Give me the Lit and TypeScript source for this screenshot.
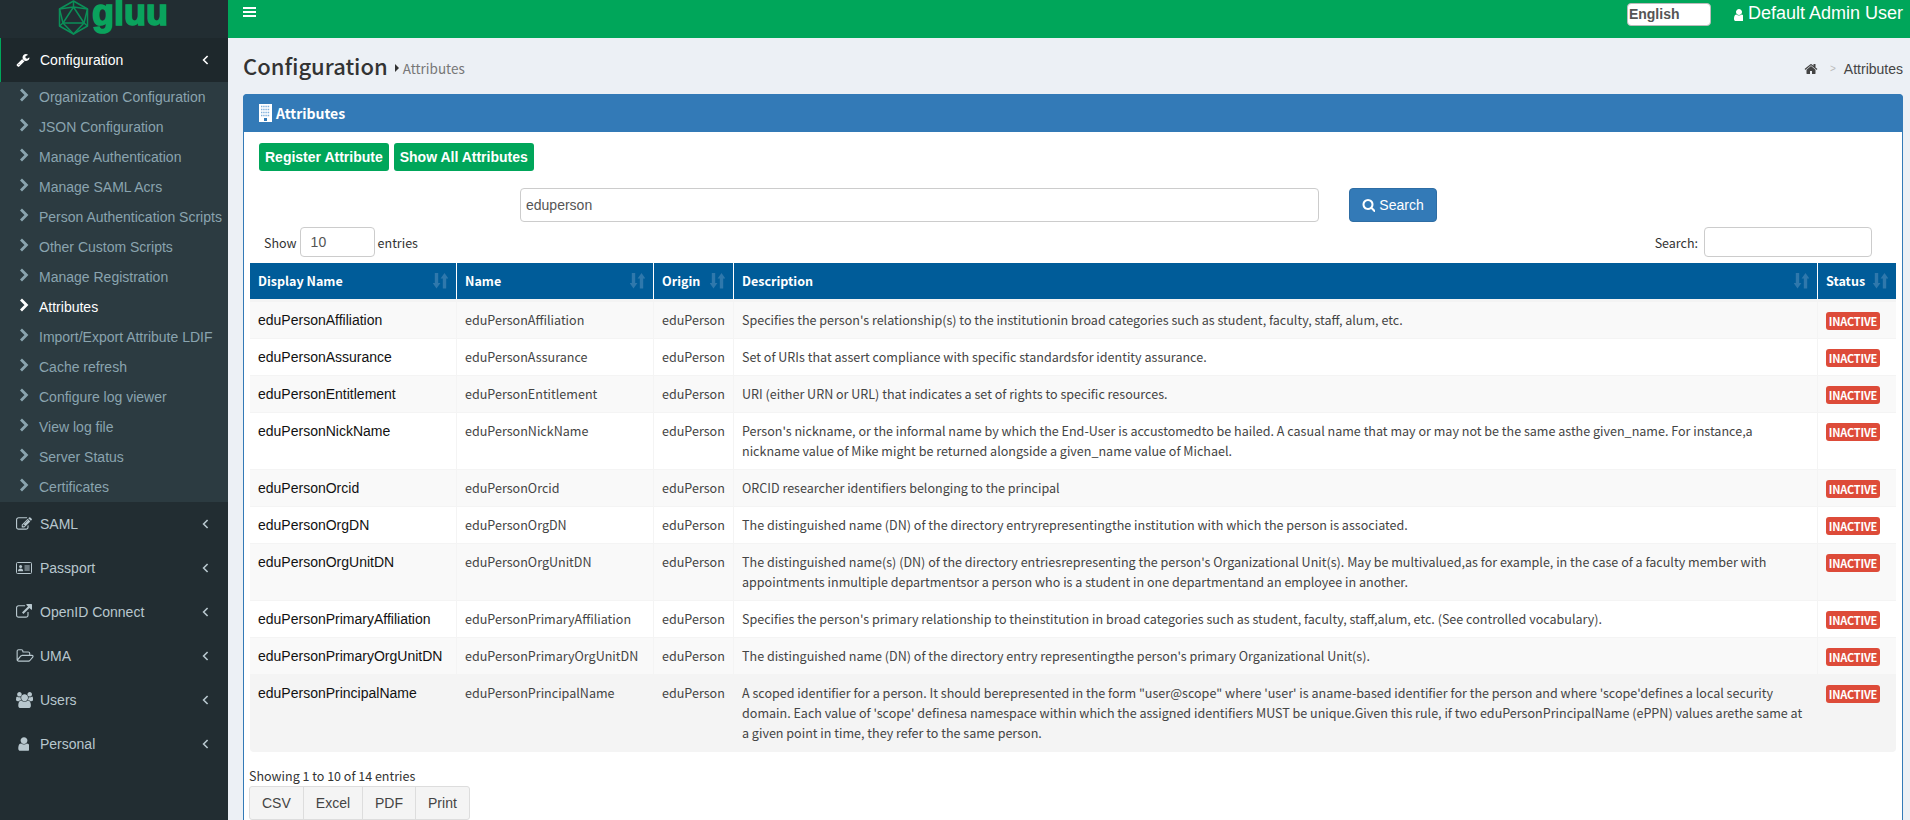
import { LitElement, html, css, svg } from 'lit';
import { customElement } from 'lit/decorators.js';

const FA = {
  wrench:
    'M448 1472q0-26-19-45t-45-19-45 19-19 45 19 45 45 19 45-19 19-45zm644-420l-682 682q-37 37-90 37-52 0-91-37l-106-108q-38-36-38-90 0-53 38-91l681-681q39 98 114.5 173.5t173.5 114.5zm634-435q0 39-23 106-47 134-164.5 217.5t-258.5 83.5q-185 0-316.5-131.5t-131.5-316.5 131.5-316.5 316.5-131.5q58 0 121.5 16.5t107.5 46.5q16 11 16 28t-16 28l-293 169v224l193 107q5-3 79-48.5t135.5-81 70.5-35.5q15 0 23.5 10t8.5 25z',
  user:
    'M1536 1399q0 109-62.5 187t-150.5 78h-854q-88 0-150.5-78t-62.5-187q0-85 8.5-160.5t31.5-152 58.5-131 94-89 134.5-34.5q131 128 313 128t313-128q76 0 134.5 34.5t94 89 58.5 131 31.5 152 8.5 160.5zm-256-887q0 159-112.5 271.5t-271.5 112.5-271.5-112.5-112.5-271.5 112.5-271.5 271.5-112.5 271.5 112.5 112.5 271.5z',
  search:
    'M1216 832q0-185-131.5-316.5t-316.5-131.5-316.5 131.5-131.5 316.5 131.5 316.5 316.5 131.5 316.5-131.5 131.5-316.5zm512 832q0 52-38 90t-90 38q-54 0-90-38l-343-342q-179 124-399 124-143 0-273.5-55.5t-225-150-150-225-55.5-273.5 55.5-273.5 150-225 225-150 273.5-55.5 273.5 55.5 225 150 150 225 55.5 273.5q0 220-124 399l343 343q37 37 37 90z',
  home:
    'M1472 992v480q0 26-19 45t-45 19h-384v-384h-256v384h-384q-26 0-45-19t-19-45v-480q0-1 .5-3t.5-3l575-474 575 474q1 2 1 6zm223-69l-62 74q-8 9-21 11h-3q-13 0-21-7l-692-577-692 577q-12 8-24 7-13-2-21-11l-62-74q-8-10-7-23.5t11-21.5l719-599q32-26 76-26t76 26l244 204v-195q0-14 9-23t23-9h192q14 0 23 9t9 23v408l219 182q10 8 11 21.5t-7 23.5z',
  users:
    'M593 896q-162 5-265 128h-134q-82 0-138-40.5t-56-118.5q0-353 124-353 6 0 43.5 21t97.5 42.5 119 21.5q67 0 133-23-5 37-5 66 0 139 81 256zm1071 637q0 120-73 189.5t-194 69.5h-874q-121 0-194-69.5t-73-189.5q0-53 3.5-103.5t14-109 26.5-108.5 43-97.5 62-81 85.5-53.5 111.5-20q10 0 43 21.5t73 48 107 48 135 21.5 135-21.5 107-48 73-48 43-21.5q61 0 111.5 20t85.5 53.5 62 81 43 97.5 26.5 108.5 14 109 3.5 103.5zm-1024-1277q0 106-75 181t-181 75-181-75-75-181 75-181 181-75 181 75 75 181zm704 384q0 159-112.5 271.5t-271.5 112.5-271.5-112.5-112.5-271.5 112.5-271.5 271.5-112.5 271.5 112.5 112.5 271.5zm576 225q0 78-56 118.5t-138 40.5h-134q-103-123-265-128 81-117 81-256 0-29-5-66 66 23 133 23 59 0 119-21.5t97.5-42.5 43.5-21q124 0 124 353zm-128-609q0 106-75 181t-181 75-181-75-75-181 75-181 181-75 181 75 75 181z',
  external:
    'M1408 928v320q0 119-84.5 203.5t-203.5 84.5h-832q-119 0-203.5-84.5t-84.5-203.5v-832q0-119 84.5-203.5t203.5-84.5h704q14 0 23 9t9 23v64q0 14-9 23t-23 9h-704q-66 0-113 47t-47 113v832q0 66 47 113t113 47h832q66 0 113-47t47-113v-320q0-14 9-23t23-9h64q14 0 23 9t9 23zm384-864v512q0 26-19 45t-45 19-45-19l-176-176-652 652q-10 10-23 10t-23-10l-114-114q-10-10-10-23t10-23l652-652-176-176q-19-19-19-45t19-45 45-19h512q26 0 45 19t19 45z',
  edit:
    'M888 1184l116-116-152-152-116 116v56h96v96h56zm440-720q-16-16-33 1l-350 350q-17 17-1 33t33-1l350-350q17-17 1-33zm80 594v190q0 119-84.5 203.5t-203.5 84.5h-832q-119 0-203.5-84.5t-84.5-203.5v-832q0-119 84.5-203.5t203.5-84.5h832q63 0 117 25 15 7 18 23 3 17-9 29l-49 49q-14 14-32 8-23-6-45-6h-832q-66 0-113 47t-47 113v832q0 66 47 113t113 47h832q66 0 113-47t47-113v-126q0-13 9-22l64-64q15-15 35-7t20 29zm-96-738l288 288-672 672h-288v-288zm444 132l-92 92-288-288 92-92q28-28 68-28t68 28l152 152q28 28 28 68t-28 68z',
  folder:
    'M1845 931q0-35-53-35h-1088q-40 0-85.5 21.5t-71.5 52.5l-294 363q-18 24-18 40 0 35 53 35h1088q40 0 86-22t71-53l294-363q18-22 18-39zm-1141-163h768v-160q0-40-28-68t-68-28h-576q-40 0-68-28t-28-68v-64q0-40-28-68t-68-28h-320q-40 0-68 28t-28 68v853l256-315q44-53 116-87.5t140-34.5zm1269 163q0 62-46 120l-295 363q-43 53-116 87.5t-140 34.5h-1088q-92 0-158-66t-66-158v-960q0-92 66-158t158-66h320q92 0 158 66t66 158v32h544q92 0 158 66t66 158v160h192q54 0 99 24.5t67 70.5q15 32 15 68z',
};

const faIcon = (d: string, size: number, width = 1792) => html`<svg
  width=${(size * width) / 1792}
  height=${size}
  viewBox="0 0 ${width} 1792"
  fill="currentColor"
  aria-hidden="true"
>
  ${svg`<path d=${d}></path>`}
</svg>`;

const idCard = html`<svg width="16" height="14" viewBox="0 0 16 14" aria-hidden="true">
  <rect x="0.5" y="1.5" width="15" height="11" rx="1" fill="none" stroke="currentColor"></rect>
  <circle cx="4.6" cy="5.6" r="1.5" fill="currentColor"></circle>
  <path d="M2 10.2c0-1.7 1-2.6 2.6-2.6s2.6.9 2.6 2.6z" fill="currentColor"></path>
  <path d="M8.5 5h5.2M8.5 7h5.2M8.5 9h5.2" stroke="currentColor"></path>
</svg>`;

const chevronRight = html`<svg width="10" height="14" viewBox="0 0 10 14" aria-hidden="true">
  <path d="M2 1.6 7.4 7 2 12.4" fill="none" stroke="currentColor" stroke-width="2.8"></path>
</svg>`;

const angleLeft = html`<svg class="angle" width="7" height="10" viewBox="0 0 7 10" aria-hidden="true">
  <path d="M5.6 1 1.6 5l4 4" fill="none" stroke="currentColor" stroke-width="1.6"></path>
</svg>`;

const sortIcon = html`<svg class="sort" width="15" height="16" viewBox="0 0 15 16" aria-hidden="true">
  <path
    d="M1.8 0h3.4v10H7.4L3.5 15.5-.4 10h2.2zM9.8 15.5h3.4v-10h2.2L11.5 0 7.6 5.5h2.2z"
    fill="currentColor"
  ></path>
</svg>`;

const buildingIcon = html`<svg width="13" height="18" viewBox="0 0 13 18" aria-hidden="true">
  <rect width="13" height="18" fill="#fff"></rect>
  <path
    d="M2 2.5h9M2 5.5h9M2 8.5h9M2 11.5h9"
    stroke="#7fb0dc"
    stroke-width="1.6"
    stroke-dasharray="1.4 .8"
  ></path>
  <rect x="5" y="14" width="3" height="3" fill="#337ab7"></rect>
</svg>`;

const logoMark = html`<svg width="31" height="35" viewBox="0 0 31 35" aria-hidden="true">
  <g fill="none" stroke="#0b8f58" stroke-width="1.5" stroke-linejoin="round">
    <path d="M15.5 1 29.5 9v17l-14 8-14-8V9z"></path>
    <path d="M15.5 7 26 23H5z"></path>
    <path d="M15.5 1v6M1.5 9l14-2 14 2M1.5 9 5 23l10.5 11L26 23l3.5-14M1.5 26 5 23M29.5 26 26 23"></path>
  </g>
</svg>`;

const SUBMENU = [
  'Organization Configuration',
  'JSON Configuration',
  'Manage Authentication',
  'Manage SAML Acrs',
  'Person Authentication Scripts',
  'Other Custom Scripts',
  'Manage Registration',
  'Attributes',
  'Import/Export Attribute LDIF',
  'Cache refresh',
  'Configure log viewer',
  'View log file',
  'Server Status',
  'Certificates',
];

const MENU = [
  { label: 'SAML', icon: faIcon(FA.edit, 16) },
  { label: 'Passport', icon: idCard },
  { label: 'OpenID Connect', icon: faIcon(FA.external, 16) },
  { label: 'UMA', icon: faIcon(FA.folder, 16, 1973) },
  { label: 'Users', icon: faIcon(FA.users, 16, 1920) },
  { label: 'Personal', icon: faIcon(FA.user, 16, 1408) },
];

const ROWS = [
  {
    name: 'eduPersonAffiliation',
    desc: "Specifies the person's relationship(s) to the institutionin broad categories such as student, faculty, staff, alum, etc.",
  },
  {
    name: 'eduPersonAssurance',
    desc: 'Set of URIs that assert compliance with specific standardsfor identity assurance.',
  },
  {
    name: 'eduPersonEntitlement',
    desc: 'URI (either URN or URL) that indicates a set of rights to specific resources.',
  },
  {
    name: 'eduPersonNickName',
    desc: "Person's nickname, or the informal name by which the End-User is accustomedto be hailed. A casual name that may or may not be the same asthe given_name. For instance,a nickname value of Mike might be returned alongside a given_name value of Michael.",
  },
  { name: 'eduPersonOrcid', desc: 'ORCID researcher identifiers belonging to the principal' },
  {
    name: 'eduPersonOrgDN',
    desc: 'The distinguished name (DN) of the directory entryrepresentingthe institution with which the person is associated.',
  },
  {
    name: 'eduPersonOrgUnitDN',
    desc: "The distinguished name(s) (DN) of the directory entriesrepresenting the person's Organizational Unit(s). May be multivalued,as for example, in the case of a faculty member with appointments inmultiple departmentsor a person who is a student in one departmentand an employee in another.",
  },
  {
    name: 'eduPersonPrimaryAffiliation',
    desc: "Specifies the person's primary relationship to theinstitution in broad categories such as student, faculty, staff,alum, etc. (See controlled vocabulary).",
  },
  {
    name: 'eduPersonPrimaryOrgUnitDN',
    desc: "The distinguished name (DN) of the directory entry representingthe person's primary Organizational Unit(s).",
  },
  {
    name: 'eduPersonPrincipalName',
    desc: "A scoped identifier for a person. It should berepresented in the form \"user@scope\" where 'user' is aname-based identifier for the person and where 'scope'defines a local security domain. Each value of 'scope' definesa namespace within which the assigned identifiers MUST be unique.Given this rule, if two eduPersonPrincipalName (ePPN) values arethe same at a given point in time, they refer to the same person.",
  },
];

@customElement('app-root')
export class AppRoot extends LitElement {
  static styles = css`
    :host {
      display: flex;
      width: 1910px;
      height: 820px;
      overflow: hidden;
      background: #ecf0f5;
      font-family: 'Liberation Sans', Arial, sans-serif;
      font-size: 14px;
      line-height: 20px;
      color: #333;
    }
    svg {
      display: block;
      flex: none;
    }

    .sidebar {
      width: 228px;
      flex: none;
      background: #222d32;
      color: #b8c7ce;
    }
    .logo {
      height: 38px;
      display: flex;
      align-items: flex-start;
      padding-left: 58px;
      gap: 3px;
      box-sizing: border-box;
    }
    .logo-text {
      font-family: 'Liberation Sans', sans-serif;
      font-weight: 700;
      font-size: 36px;
      line-height: 25px;
      color: #0aa35d;
      -webkit-text-stroke: 1.6px #0aa35d;
    }
    .menu-item {
      height: 44px;
      display: flex;
      align-items: center;
      padding-left: 16px;
      color: #b8c7ce;
    }
    .menu-item.active {
      background: #1e282c;
      border-left: 1px solid #00a65a;
      padding-left: 15px;
      color: #fff;
    }
    .menu-icon {
      width: 24px;
      flex: none;
      display: flex;
      justify-content: flex-start;
    }
    .menu-label {
      flex: 1;
    }
    .angle {
      margin-right: 19px;
    }
    .submenu {
      background: #2c3b41;
    }
    .sub-item {
      height: 30px;
      display: flex;
      align-items: center;
      gap: 10px;
      padding-left: 19px;
      color: #8aa4af;
      white-space: nowrap;
    }
    .sub-item svg {
      margin-top: -5px;
    }
    .sub-item.current {
      color: #fff;
    }

    .main {
      flex: 1;
      min-width: 0;
    }
    .topbar {
      height: 38px;
      box-sizing: border-box;
      background: #00a65a;
      display: flex;
      align-items: center;
      color: #fff;
      padding: 0 7px 10px 15px;
    }
    .burger {
      width: 13px;
      height: 10px;
      margin-top: -4px;
      border-top: 2px solid #fff;
      border-bottom: 2px solid #fff;
      position: relative;
      box-sizing: border-box;
    }
    .burger::after {
      content: '';
      position: absolute;
      left: 0;
      right: 0;
      top: 2px;
      height: 2px;
      background: #fff;
    }
    .top-right {
      margin-left: auto;
      display: flex;
      align-items: center;
    }
    .lang {
      appearance: none;
      width: 84px;
      height: 23px;
      box-sizing: border-box;
      border: 1px solid #bbb;
      border-radius: 4px;
      background: #fff;
      color: #555;
      font: 700 14px 'Liberation Sans', Arial, sans-serif;
      padding: 0 1px;
      margin-right: 21px;
    }
    .user {
      display: flex;
      align-items: center;
      gap: 5px;
      font-size: 18px;
      margin-top: -2px;
    }
    .user svg {
      margin-top: 3px;
    }

    .content {
      padding: 0 7px 0 15px;
    }
    .page-head {
      height: 56px;
      display: flex;
      align-items: center;
    }
    h1 {
      margin: -2px 0 0;
      font: 500 22px/28px 'Noto Sans CJK SC', sans-serif;
      color: #333;
    }
    .crumb-sub {
      display: flex;
      align-items: center;
      margin: 3px 0 0 7px;
      font: 400 13.5px/20px 'Noto Sans CJK SC', sans-serif;
      color: #777;
    }
    .caret {
      width: 0;
      height: 0;
      border-left: 4px solid #333;
      border-top: 4px solid transparent;
      border-bottom: 4px solid transparent;
      margin-right: 4px;
    }
    .breadcrumb {
      margin: 5px 0 0 auto;
      display: flex;
      align-items: center;
      color: #444;
    }
    .breadcrumb .sep {
      font-size: 10px;
      color: #bbb;
      margin: 0 8px 0 12px;
    }

    .panel {
      border: 1px solid #337ab7;
      border-radius: 4px 4px 0 0;
      background: #fff;
    }
    .panel-head {
      height: 38px;
      margin: -1px -1px 0;
      padding-left: 16px;
      background: #337ab7;
      border-radius: 4px 4px 0 0;
      display: flex;
      align-items: center;
      gap: 4px;
      color: #fff;
      font: 700 14px 'Noto Sans CJK SC', sans-serif;
    }
    .panel-body {
      padding: 11px 6px 0;
    }
    .actions {
      display: flex;
      gap: 5px;
      padding-left: 9px;
    }
    .btn-green {
      height: 28px;
      padding: 0 6px;
      border: 0;
      border-radius: 3px;
      background: #00a65a;
      color: #fff;
      font: 700 14px 'Liberation Sans', Arial, sans-serif;
    }
    .search-row {
      display: flex;
      gap: 30px;
      margin: 17px 0 5px 270px;
    }
    .search-input {
      width: 799px;
      height: 34px;
      box-sizing: border-box;
      border: 1px solid #ccc;
      border-radius: 4px;
      padding: 0 5px;
      color: #555;
      font: 14px 'Liberation Sans', Arial, sans-serif;
    }
    .btn-search {
      width: 88px;
      height: 34px;
      border: 1px solid #2e6da4;
      border-radius: 4px;
      background: #337ab7;
      color: #fff;
      display: flex;
      align-items: center;
      justify-content: center;
      gap: 4px;
      font: 14px 'Liberation Sans', Arial, sans-serif;
    }
    .dt-top {
      display: flex;
      justify-content: space-between;
      align-items: center;
      height: 30px;
      padding: 0 24px 0 14px;
      margin-bottom: 6px;
      font: 12.5px 'Noto Sans CJK SC', sans-serif;
      color: #333;
    }
    .dt-top label {
      display: flex;
      align-items: center;
      gap: 3px;
    }
    .dt-top input {
      height: 30px;
      box-sizing: border-box;
      border: 1px solid #ccc;
      border-radius: 4px;
      padding: 0 10px;
      color: #555;
      font: 14px 'Liberation Sans', Arial, sans-serif;
    }
    .len {
      width: 75px;
    }
    .filter {
      width: 168px;
      margin-left: 3px;
    }

    table {
      width: 1646px;
      table-layout: fixed;
      border-collapse: separate;
      border-spacing: 0;
      font: 12.55px/20px 'Noto Sans CJK SC', sans-serif;
      color: #444;
    }
    th {
      height: 36px;
      box-sizing: border-box;
      background: #005c99;
      color: #fff;
      font-weight: 700;
      text-align: left;
      padding: 0 8px;
      border-right: 1px solid #fff;
    }
    th:last-child {
      border-right: 0;
    }
    .th-inner {
      display: flex;
      align-items: center;
      justify-content: space-between;
    }
    .sort {
      color: #2f78ac;
    }
    td {
      padding: 8px;
      vertical-align: top;
      border-right: 1px solid #f4f4f4;
      border-bottom: 1px solid #f4f4f4;
    }
    td:last-child {
      border-right: 0;
    }
    tbody tr:first-child td {
      border-top: 3px solid #f4f4f4;
    }
    tbody tr:nth-child(odd) td {
      background: #f9f9f9;
    }
    tbody tr.hover td {
      background: #f4f4f4;
      border-color: #f4f4f4;
    }
    tbody tr.hover td:first-child {
      border-bottom-left-radius: 4px;
    }
    tbody tr.hover td:last-child {
      border-bottom-right-radius: 4px;
    }
    .display {
      font: 14px/20px 'Liberation Sans', Arial, sans-serif;
      color: #111;
    }
    .badge {
      display: block;
      width: 54px;
      height: 18px;
      margin-top: 2px;
      border-radius: 3px;
      background: #dd4b39;
      color: #fff;
      font: 700 11px/18px 'Noto Sans CJK SC', sans-serif;
      letter-spacing: -0.2px;
      text-align: center;
    }
    .info {
      margin: 14px 0 0 -1px;
      font: 12.5px/20px 'Noto Sans CJK SC', sans-serif;
      color: #333;
    }
    .export {
      display: inline-flex;
      height: 34px;
      margin-left: -1px;
      box-sizing: border-box;
      border: 1px solid #ddd;
      border-radius: 3px;
      background: #f4f4f4;
    }
    .export button {
      height: 32px;
      padding: 0 12px;
      border: 0;
      border-right: 1px solid #ddd;
      background: none;
      color: #444;
      font: 14px 'Liberation Sans', Arial, sans-serif;
    }
    .export button:last-child {
      border-right: 0;
    }
  `;

  private renderSidebar() {
    return html`
      <aside class="sidebar">
        <div class="logo">${logoMark}<span class="logo-text">gluu</span></div>
        <div class="menu-item active">
          <span class="menu-icon">${faIcon(FA.wrench, 14)}</span>
          <span class="menu-label">Configuration</span>
          ${angleLeft}
        </div>
        <div class="submenu">
          ${SUBMENU.map(
            (s) => html`<div class="sub-item ${s === 'Attributes' ? 'current' : ''}">
              ${chevronRight}<span>${s}</span>
            </div>`
          )}
        </div>
        ${MENU.map(
          (m) => html`<div class="menu-item">
            <span class="menu-icon">${m.icon}</span>
            <span class="menu-label">${m.label}</span>
            ${angleLeft}
          </div>`
        )}
      </aside>
    `;
  }

  private renderTable() {
    const heads = ['Display Name', 'Name', 'Origin', 'Description', 'Status'];
    return html`
      <table>
        <colgroup>
          <col style="width:207px" />
          <col style="width:197px" />
          <col style="width:80px" />
          <col style="width:1084px" />
          <col style="width:78px" />
        </colgroup>
        <thead>
          <tr>
            ${heads.map(
              (h) => html`<th><div class="th-inner"><span>${h}</span>${sortIcon}</div></th>`
            )}
          </tr>
        </thead>
        <tbody>
          ${ROWS.map(
            (r, i) => html`<tr class=${i === ROWS.length - 1 ? 'hover' : ''}>
              <td class="display">${r.name}</td>
              <td>${r.name}</td>
              <td>eduPerson</td>
              <td>${r.desc}</td>
              <td><span class="badge">INACTIVE</span></td>
            </tr>`
          )}
        </tbody>
      </table>
    `;
  }

  render() {
    return html`
      ${this.renderSidebar()}
      <div class="main">
        <header class="topbar">
          <div class="burger"></div>
          <div class="top-right">
            <select class="lang"><option>English</option></select>
            <div class="user">${faIcon(FA.user, 14, 1408)}<span>Default Admin User</span></div>
          </div>
        </header>
        <div class="content">
          <div class="page-head">
            <h1>Configuration</h1>
            <div class="crumb-sub"><span class="caret"></span>Attributes</div>
            <div class="breadcrumb">
              ${faIcon(FA.home, 14)}<span class="sep">&gt;</span><span>Attributes</span>
            </div>
          </div>
          <section class="panel">
            <div class="panel-head">${buildingIcon}<span>Attributes</span></div>
            <div class="panel-body">
              <div class="actions">
                <button class="btn-green">Register Attribute</button>
                <button class="btn-green">Show All Attributes</button>
              </div>
              <div class="search-row">
                <input class="search-input" value="eduperson" />
                <button class="btn-search">${faIcon(FA.search, 14, 1664)}Search</button>
              </div>
              <div class="dt-top">
                <label>Show <input class="len" value="10" /> entries</label>
                <label>Search: <input class="filter" /></label>
              </div>
              ${this.renderTable()}
              <div class="info">Showing 1 to 10 of 14 entries</div>
              <div class="export">
                <button>CSV</button><button>Excel</button><button>PDF</button><button>Print</button>
              </div>
            </div>
          </section>
        </div>
      </div>
    `;
  }
}
